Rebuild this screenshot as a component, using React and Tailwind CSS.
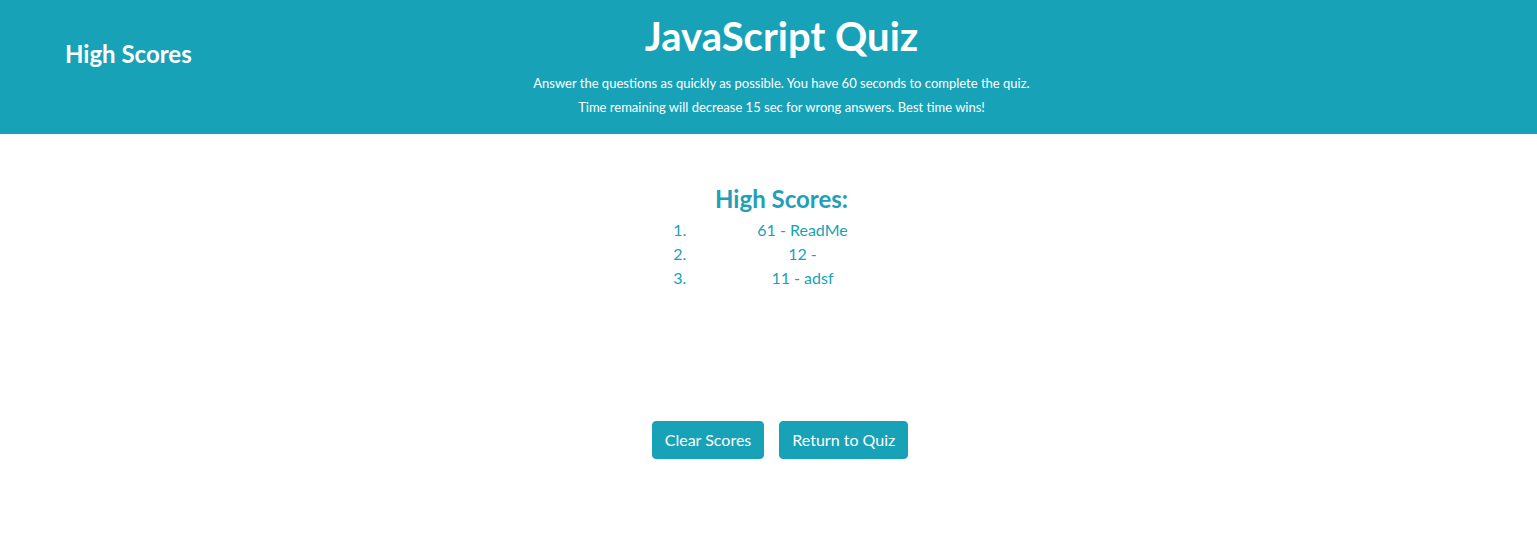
import React from "react";

const scores = ["61 - ReadMe", "12 -", "11 - adsf"];

export default function App() {
  return (
    <div className="min-h-[559px] bg-white font-['Lato','Open_Sans',sans-serif]">
      <header className="grid grid-cols-[300px_1fr_274px] h-[134px] bg-[#17a2b8] text-white">
        <div className="pl-[65px] pt-[39px]">
          <h4 className="text-[24px] leading-[29px] font-bold">High Scores</h4>
        </div>
        <div className="text-center pt-[12px]">
          <h1 className="text-[40px] leading-[48px] font-bold">JavaScript Quiz</h1>
          <p className="mt-[11px] text-[13px] leading-[24px]">
            Answer the questions as quickly as possible. You have 60 seconds to complete the quiz.
          </p>
          <p className="text-[13px] leading-[24px]">
            Time remaining will decrease 15 sec for wrong answers. Best time wins!
          </p>
        </div>
        <div />
      </header>

      <main className="flex flex-col items-center pl-[23px] pt-[50px]">
        <h4 className="ml-[3px] text-[24px] leading-[29px] font-bold text-[#1fa0b6] mb-[5px]">
          High Scores:
        </h4>
        <ol className="ml-[5px] list-decimal w-[264px] pl-10 text-center text-[16px] leading-[24px] text-[#17a2b8]">
          {scores.map((s, i) => (
            <li key={i}>{s}</li>
          ))}
        </ol>

        <div className="flex gap-[15px] mt-[131px]">
          <button className="px-3 py-[6px] text-[16px] leading-[24px] text-white bg-[#17a2b8] border border-[#17a2b8] rounded">
            Clear Scores
          </button>
          <button className="px-3 py-[6px] text-[16px] leading-[24px] text-white bg-[#17a2b8] border border-[#17a2b8] rounded">
            Return to Quiz
          </button>
        </div>
      </main>
    </div>
  );
}
